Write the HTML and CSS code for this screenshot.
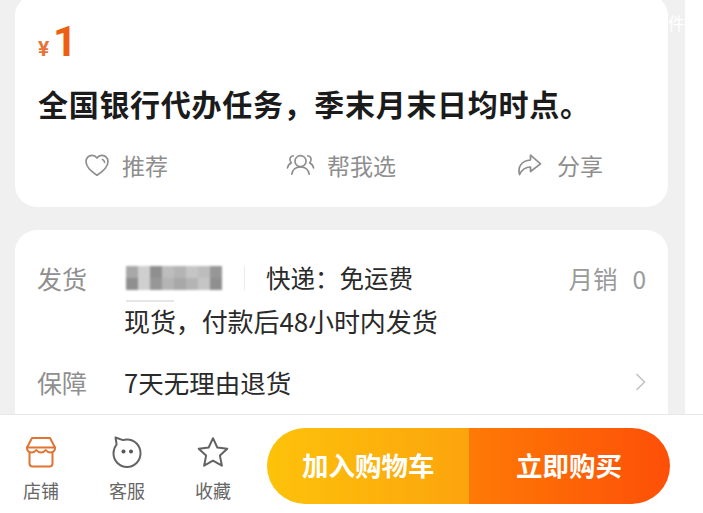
FILE: index.html
```html
<!DOCTYPE html>
<html lang="zh-CN">
<head>
<meta charset="utf-8">
<title>商品详情</title>
<link rel="stylesheet" href="styles.css">
</head>
<body>
<div class="page">
  <main class="screen">
    <span class="ghost">件</span>
    <section class="card card-top">
      <div class="price"><span class="yen">¥</span><span class="amount">1</span></div>
      <h1 class="title">全国银行代办任务，季末月末日均时点。</h1>
      <div class="actions">
        <div class="action action-a">
          <svg class="aicon" viewBox="0 0 26 24"><path d="M13 22.2C6.5 17.6 2 14 2 8.6 2 5 4.7 2.3 8 2.3c2 0 3.8 1 5 2.7 1.200-1.700 3-2.700 5-2.700 3.300 0 6 2.700 6 6.300 0 5.400-4.500 9-11 13.600z"/><path d="M18.500 6.500c1.100.5 1.900 1.500 2 2.800"/></svg>
          <span>推荐</span>
        </div>
        <div class="action action-b">
          <svg class="aicon wide" viewBox="0 0 30 24"><circle cx="15" cy="8" r="5.700"/><path d="M6 21.500c.6-4.600 4.200-7.500 9-7.500s8.400 2.900 9 7.500"/><path d="M7.500 2.500C5 3 3.800 5 4.200 7.300c.2 1 .7 1.800 1.400 2.400C3.500 10.800 2 12.500 1.500 15"/><path d="M22.500 2.500c2.500.5 3.700 2.500 3.300 4.800-.2 1-.7 1.800-1.400 2.400 2.100 1.100 3.600 2.800 4.100 5.300"/></svg>
          <span>帮我选</span>
        </div>
        <div class="action action-c">
          <svg class="aicon" viewBox="0 0 26 24"><path d="M14.500 2.200 24.500 10.800 14.500 18.500V14C9.500 14 6 16.500 3.500 21.500 1.500 14 5.500 7.500 14.500 7z"/></svg>
          <span>分享</span>
        </div>
      </div>
    </section>
    <section class="card card-info">
      <div class="row row-ship">
        <span class="label">发货</span>
        <div class="ship-body">
          <div class="ship-line">
            <div class="mosaic">
              <i class="m1"></i><i class="m2"></i><i class="m3"></i><i class="m4"></i><i class="m5"></i><i class="m6"></i><i class="m4"></i><i class="m8"></i>
              <i class="m3"></i><i class="m2"></i><i class="m8"></i><i class="m5"></i><i class="m1"></i><i class="m5"></i><i class="m6"></i><i class="m3"></i>
            </div>
            <span class="sep"></span>
            <span class="text">快递：免运费</span>
            <span class="sales"><span>月销</span><span>0</span></span>
          </div>
          <div class="smear"></div>
          <div class="text stock">现货，付款后48小时内发货</div>
        </div>
      </div>
      <div class="row row-guard">
        <span class="label">保障</span>
        <span class="text guard">7天无理由退货</span>
        <svg class="chev" viewBox="0 0 12 20"><path d="M2 2l8 8-8 8"/></svg>
      </div>
    </section>
  </main>
  <footer class="bar">
    <div class="tabs">
      <div class="tab">
        <svg class="ticon" viewBox="0 0 34 32"><path class="orange" d="M8 2h18l5 9.500c.3 2.800-1.700 5-4.500 5-2 0-3.700-1-4.800-2.500-1 1.400-3 2.500-4.700 2.500s-3.700-1.100-4.700-2.500c-1.100 1.500-2.800 2.500-4.800 2.500-2.800 0-4.800-2.200-4.500-5z"/><path class="orange" d="M3 11.500h28M5.500 16v11.500a3 3 0 0 0 3 3h17a3 3 0 0 0 3-3V16"/></svg>
        <span>店铺</span>
      </div>
      <div class="tab">
        <svg class="ticon" viewBox="0 0 34 32"><path class="dark" d="M5.500 1.500l7.500 2.600C14 3.800 15.500 3.600 17 3.600c7.600 0 13.500 6 13.500 13.700S24.600 31 17 31 3.500 25 3.500 17.300c0-3.400 1.100-6.300 3.100-8.800z"/><circle class="dot" cx="13.500" cy="15.500" r="2"/><circle class="dot" cx="21" cy="15.500" r="2"/></svg>
        <span>客服</span>
      </div>
      <div class="tab">
        <svg class="ticon" viewBox="0 0 34 32"><path class="dark" d="M17 2.200l4.300 9.300 10 1.200-7.400 6.900 2 10.100L17 24.700l-8.900 5 2-10.100-7.400-6.900 10-1.200z"/></svg>
        <span>收藏</span>
      </div>
    </div>
    <div class="buy">
      <div class="btn btn-cart">加入购物车</div>
      <div class="btn btn-now">立即购买</div>
    </div>
  </footer>
</div>
</body>
</html>
```
FILE: styles.css
```css
* { box-sizing: border-box; }
html, body { margin: 0; padding: 0; background: #fff; }
body {
  width: 703px;
  height: 513px;
  overflow: hidden;
  font-family: "Noto Sans CJK SC", "Noto Sans", sans-serif;
}
.page { display: flex; flex-direction: column; height: 513px; }
.screen {
  position: relative;
  width: 685px;
  height: 414px;
  flex: none;
  padding: 0 17px 0 15px;
  background: #f0f0f0;
  overflow: hidden;
}
.ghost {
  position: absolute;
  left: 668px;
  top: 9px;
  font-size: 17px;
  line-height: 28px;
  color: #fff;
}
.card { background: #fff; border-radius: 22px; }
.card-top {
  height: 213px;
  margin-top: -6px;
  padding: 23px 23px 0;
}
.price {
  display: flex;
  align-items: baseline;
  height: 50px;
  color: #ee5f14;
  font-family: "Roboto", "Noto Sans", sans-serif;
  font-weight: 700;
}
.yen { font-size: 21px; font-weight: 700; color: #e9743a; width: 15px; }
.amount { font-size: 42px; line-height: 50px; }
.title {
  margin: 16px 0 0;
  font-size: 30px;
  letter-spacing: .7px;
  line-height: 40px;
  font-weight: 700;
  color: #1b1b1b;
  white-space: nowrap;
}
.actions {
  display: flex;
  margin-top: 25px;
  height: 34px;
  align-items: center;
  font-size: 23px;
  color: #8e8e8e;
}
.action { display: flex; align-items: center; gap: 12px; }
.action-a { margin-left: 46px; }
.action-b { margin-left: 118px; gap: 12px; }
.action-c { margin-left: 120px; gap: 15px; }
.aicon { width: 26px; height: 24px; fill: none; stroke: #8e8e8e; stroke-width: 1.700; stroke-linejoin: round; stroke-linecap: round; }
.aicon.wide { width: 29px; }
.card-info {
  margin-top: 23px;
  height: 210px;
  padding: 26px 23px 0 22px;
  font-size: 24.500px;
}
.row { display: flex; }
.label { color: #8f8f8f; width: 87px; flex: none; line-height: 46px; font-size: 25px; }
.row-ship { height: 80px; }
.row-ship .label { margin-top: -1px; }
.ship-body { flex: 1; }
.ship-line { display: flex; align-items: center; height: 46px; margin-top: -1px; }
.text { color: #2a2a2a; white-space: nowrap; line-height: 46px; }
.mosaic {
  display: grid;
  grid-template-columns: repeat(8, 12px);
  grid-template-rows: repeat(2, 12px);
  width: 96px;
  height: 24px;
  margin-left: 2px;
  filter: blur(.8px);
}
.m1 { background: #a8a8a8; }
.m2 { background: #cfcfcf; }
.m3 { background: #8f8f8f; }
.m4 { background: #bdbdbd; }
.m5 { background: #b4b4b4; }
.m6 { background: #c5c5c5; }
.m8 { background: #979797; }
.sep { width: 1px; height: 24px; margin: 0 21px 0 22px; background: #eaeaea; }
.sales { margin-left: auto; margin-right: -1px; display: flex; gap: 15px; color: #9a9a9a; }
.smear { width: 48px; height: 2px; margin: -1px 0 0 2px; background: #e6e6e6; filter: blur(.6px); }
.stock { margin-top: -3px; line-height: 44px; font-size: 26px; letter-spacing: -.1px; }
.row-guard { align-items: center; height: 46px; margin-top: 23px; }
.guard { font-size: 25.500px; }
.chev { margin-left: auto; margin-right: -2px; width: 13px; height: 20px; fill: none; stroke: #c4c4c4; stroke-width: 1.600; }
.bar {
  flex: 1;
  display: flex;
  align-items: flex-start;
  border-top: 1px solid #e8e8e8;
  background: #fff;
}
.tabs { display: flex; padding-left: 13px; width: 267px; flex: none; padding-top: 21px; }
.tab {
  width: 56px;
  margin-right: 30px;
  flex: none;
  display: flex;
  flex-direction: column;
  align-items: center;
  font-size: 18px;
  line-height: 24px;
  color: #666;
}
.tab:last-child { margin-right: 0; }
.ticon { width: 34px; height: 32px; margin-bottom: 10px; fill: none; stroke-width: 2; stroke-linejoin: round; stroke-linecap: round; }
.orange { stroke: #df7433; }
.dark { stroke: #636363; }
.dot { fill: #555; stroke: none; }
.buy {
  display: flex;
  width: 403px;
  height: 76px;
  margin-top: 13px;
  border-radius: 38px;
  overflow: hidden;
}
.btn {
  display: flex;
  align-items: center;
  padding-bottom: 3px;
  color: #fff;
  font-size: 26.500px;
  font-weight: 700;
  white-space: nowrap;
}
.btn-cart {
  width: 202px;
  padding-left: 35px;
  background: linear-gradient(90deg, #fdc20a, #fca40d);
}
.btn-now {
  width: 201px;
  padding-left: 47px;
  background: linear-gradient(90deg, #fe7a05, #fd4f08);
}
```
